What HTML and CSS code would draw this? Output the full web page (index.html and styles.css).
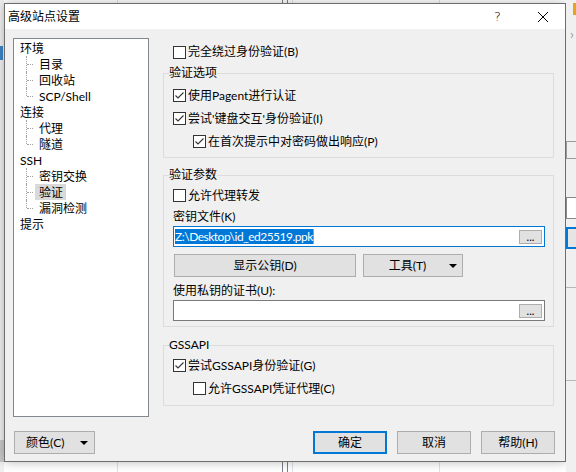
FILE: index.html
```html
<!DOCTYPE html>
<html lang="zh-CN">
<head>
    <meta charset="UTF-8">
    <title>高级站点设置</title>
    <link rel="stylesheet" href="styles.css">
</head>
<body>

<div class="desk">
    <div class="side-left">
        <div class="sl-icon"></div>
        <div class="sl-band"></div>
    </div>

    <div class="dialog">
        <div class="titlebar">
            <span class="title">高级站点设置</span>
            <span class="cap-btn help">?</span>
            <span class="cap-btn close">
                <svg width="10" height="10" viewBox="0 0 10 10"><path d="M0 0 L10 10 M10 0 L0 10" stroke="#000" stroke-width="1"/></svg>
            </span>
        </div>

        <div class="content">
            <div class="main">
                <div class="tree">
                    <ul>
                        <li><span class="node">环境</span>
                            <ul>
                                <li><span class="node">目录</span></li>
                                <li><span class="node">回收站</span></li>
                                <li><span class="node">SCP/Shell</span></li>
                            </ul>
                        </li>
                        <li><span class="node">连接</span>
                            <ul>
                                <li><span class="node">代理</span></li>
                                <li><span class="node">隧道</span></li>
                            </ul>
                        </li>
                        <li><span class="node">SSH</span>
                            <ul>
                                <li><span class="node">密钥交换</span></li>
                                <li><span class="node selected">验证</span></li>
                                <li><span class="node">漏洞检测</span></li>
                            </ul>
                        </li>
                        <li><span class="node">提示</span></li>
                    </ul>
                </div>

                <div class="panel">
                    <div class="check top-check">
                        <span class="box"></span>完全绕过身份验证(B)
                    </div>

                    <fieldset class="group group-options">
                        <legend>验证选项</legend>
                        <div class="check row23">
                            <span class="box"><svg width="11" height="11" viewBox="0 0 11 11"><path d="M1.5 5.5 L4 8 L9.5 2.5" fill="none" stroke="#333" stroke-width="1.1"/></svg></span>使用Pagent进行认证
                        </div>
                        <div class="check row23">
                            <span class="box"><svg width="11" height="11" viewBox="0 0 11 11"><path d="M1.5 5.5 L4 8 L9.5 2.5" fill="none" stroke="#333" stroke-width="1.1"/></svg></span>尝试'键盘交互'身份验证(I)
                        </div>
                        <div class="check row23 sub">
                            <span class="box"><svg width="11" height="11" viewBox="0 0 11 11"><path d="M1.5 5.5 L4 8 L9.5 2.5" fill="none" stroke="#333" stroke-width="1.1"/></svg></span>在首次提示中对密码做出响应(P)
                        </div>
                    </fieldset>

                    <fieldset class="group group-params">
                        <legend>验证参数</legend>
                        <div class="check row-forward">
                            <span class="box"></span>允许代理转发
                        </div>
                        <div class="label label-key">密钥文件(K)</div>
                        <div class="field focused">
                            <span class="selection">Z:\Desktop\id_ed25519.ppk</span><span class="caret"></span>
                            <span class="dots">...</span>
                        </div>
                        <div class="btn-row">
                            <span class="btn btn-show">显示公钥(D)</span>
                            <span class="btn btn-tools"><span class="btn-text">工具(T)</span><span class="arrow"></span></span>
                        </div>
                        <div class="label label-cert">使用私钥的证书(U):</div>
                        <div class="field">
                            <span class="dots">...</span>
                        </div>
                    </fieldset>

                    <fieldset class="group group-gss">
                        <legend>GSSAPI</legend>
                        <div class="check row23">
                            <span class="box"><svg width="11" height="11" viewBox="0 0 11 11"><path d="M1.5 5.5 L4 8 L9.5 2.5" fill="none" stroke="#333" stroke-width="1.1"/></svg></span>尝试GSSAPI身份验证(G)
                        </div>
                        <div class="check row23 sub">
                            <span class="box"></span>允许GSSAPI凭证代理(C)
                        </div>
                    </fieldset>
                </div>
            </div>

            <div class="footer">
                <span class="btn btn-color"><span>颜色(C)</span><span class="arrow"></span></span>
                <span class="btn btn-foot default">确定</span>
                <span class="btn btn-foot">取消</span>
                <span class="btn btn-foot">帮助(H)</span>
            </div>
        </div>
    </div>

    <div class="side-right">
        <div class="sr-icon"></div>
        <div class="sr-chev">›</div>
        <div class="sr-spin"></div>
        <div class="sr-box"></div>
        <div class="sr-combo"></div>
        <div class="sr-line"></div>
        <div class="sr-line second"></div>
    </div>
</div>

</body>
</html>
```

FILE: styles.css
```css
body {
    margin: 0;
    width: 576px;
    height: 472px;
    overflow: hidden;
    background-color: #fff;
    font-family: Lato, "Noto Sans CJK SC", sans-serif;
    font-size: 12px;
    line-height: 16px;
    color: #000;
}
.desk {
    display: flex;
    align-items: flex-start;
    height: 472px;
    background-image: linear-gradient(90deg,
        transparent 117px, #dbe2ea 117px 118px,
        transparent 118px 282px, #7b7f8c 282px 283px,
        transparent 283px 287px, #7b7f8c 287px 288px,
        transparent 288px 292px, #dbe2ea 292px 293px,
        transparent 293px 439px, #dbe2ea 439px 440px,
        transparent 440px);
}

/* bits of the window behind */
.side-left {
    width: 4px;
    height: 472px;
    flex-shrink: 0;
    background-color: #f0f0f0;
}
.sl-icon {
    width: 3px;
    height: 14px;
    margin-top: 46px;
    background-color: #3c86c8;
}
.sl-band {
    height: 22px;
    margin-top: 380px;
    background-color: #c9c9c9;
}
.side-right {
    width: 10px;
    height: 472px;
    flex-shrink: 0;
    background-color: #f0f0f0;
}
.sr-icon {
    width: 3px;
    height: 12px;
    margin: 3px 0 0 7px;
    background-color: #e8a318;
}
.sr-chev {
    margin: 12px 0 0 4px;
    height: 14px;
    line-height: 14px;
    color: #9a9a9a;
    font-size: 14px;
}
.sr-spin {
    height: 18px;
    margin-top: 100px;
    border: 1px solid #9a9a9a;
    border-right: none;
    box-sizing: border-box;
}
.sr-box {
    height: 22px;
    margin-top: 38px;
    border: 1px solid #8a8a8a;
    border-right: none;
    background-color: #fff;
    box-sizing: border-box;
}
.sr-combo {
    height: 22px;
    margin-top: 8px;
    border: 2px solid #0078d7;
    border-right: none;
    background-color: #e5e5e5;
    box-sizing: border-box;
}
.sr-line {
    height: 1px;
    margin-top: 38px;
    background-color: #b8b8b8;
}
.sr-line.second {
    margin-top: 92px;
}

/* dialog */
.dialog {
    width: 562px;
    height: 459px;
    margin-top: 3px;
    flex-shrink: 0;
    box-sizing: border-box;
    border: 1px solid #6d6d6d;
    background-color: #f0f0f0;
    box-shadow: 0 0 10px rgba(0, 0, 0, 0.28);
    display: flex;
    flex-direction: column;
}
.titlebar {
    height: 25px;
    display: flex;
    align-items: center;
    background-color: #fff;
}
.title {
    flex: 1;
    padding-left: 3px;
    line-height: 25px;
}
.cap-btn {
    width: 45px;
    height: 25px;
    display: flex;
    align-items: center;
    justify-content: center;
}
.help {
    font-family: "DejaVu Sans", sans-serif;
    font-size: 13px;
    font-weight: 300;
}
.close svg {
    margin-top: 1px;
}

.main {
    display: flex;
    align-items: flex-start;
    padding: 9px 0 0 8px;
}

/* tree */
.tree {
    width: 136px;
    height: 379px;
    box-sizing: border-box;
    border: 1px solid #828790;
    background-color: #fff;
    padding-top: 1px;
}
.tree ul {
    list-style: none;
    margin: 0;
    padding: 0;
}
.tree li {
    position: relative;
}
.node {
    display: block;
    width: max-content;
    height: 16px;
    line-height: 17px;
    margin-left: 2px;
    padding: 0 3px 0 4px;
    white-space: nowrap;
}
.tree ul ul {
    margin-left: 19px;
}
.tree ul ul li::before {
    content: "";
    position: absolute;
    left: -7px;
    top: 0;
    height: 16px;
    border-left: 1px dotted #a0a0a0;
}
.tree ul ul li:last-child::before {
    height: 8px;
}
.tree ul ul li::after {
    content: "";
    position: absolute;
    left: -6px;
    top: 8px;
    width: 6px;
    border-top: 1px dotted #a0a0a0;
}
.node.selected {
    background-color: #d9d9d9;
}

/* right side */
.panel {
    width: 391px;
    margin-left: 14px;
}
.check {
    display: flex;
    align-items: center;
    white-space: nowrap;
}
.box {
    width: 13px;
    height: 13px;
    box-sizing: border-box;
    border: 1px solid #333;
    background-color: #fff;
    margin-right: 2px;
    flex-shrink: 0;
}
.box svg {
    display: block;
}
.top-check {
    height: 16px;
    margin-top: 6px;
    padding-left: 10px;
}
.row23 {
    height: 23px;
}
.check.sub {
    margin-left: 20px;
}

.group {
    margin: 0;
    border: 1px solid #dcdcdc;
    min-width: 0;
}
.group legend {
    padding: 0;
    margin-left: -4px;
    height: 16px;
    line-height: 16px;
}
.group-options {
    margin-top: 5px;
    padding: 3px 8px 4px 9px;
}
.group-params {
    margin-top: 9px;
    padding: 2px 8px 5px 9px;
}
.group-gss {
    margin-top: 10px;
    padding: 1px 8px 5px 9px;
}

.row-forward {
    height: 21px;
}
.label {
    line-height: 19px;
}
.label-key {
    height: 20px;
    line-height: 21px;
}
.label-cert {
    height: 19px;
    margin-top: 4px;
}
.field {
    height: 21px;
    box-sizing: border-box;
    border: 1px solid #7a7a7a;
    background-color: #fff;
    display: flex;
    align-items: center;
    padding: 0 2px 0 1px;
}
.field.focused {
    border-color: #0078d7;
}
.selection {
    background-color: #0078d7;
    color: #fff;
    height: 15px;
    line-height: 15px;
    letter-spacing: -0.5px;
    white-space: nowrap;
}
.caret {
    width: 1px;
    height: 15px;
    background-color: #ff8a28;
}
.dots {
    margin-left: auto;
    width: 23px;
    height: 14px;
    box-sizing: border-box;
    border: 1px solid #adadad;
    background-color: #e1e1e1;
    text-align: center;
    line-height: 11px;
    font-size: 11px;
}

.btn {
    height: 23px;
    box-sizing: border-box;
    border: 1px solid #adadad;
    background-color: #e1e1e1;
    display: flex;
    align-items: center;
    justify-content: center;
    white-space: nowrap;
}
.arrow {
    width: 0;
    height: 0;
    border-left: 4px solid transparent;
    border-right: 4px solid transparent;
    border-top: 4px solid #000;
}
.btn-row {
    display: flex;
    margin-top: 7px;
    padding-left: 1px;
}
.btn-show {
    width: 182px;
}
.btn-tools {
    width: 100px;
    margin-left: 7px;
    padding-right: 5px;
}
.btn-tools .btn-text {
    flex: 1;
    text-align: center;
    padding-left: 2px;
}

.footer {
    display: flex;
    align-items: center;
    margin-top: 14px;
    padding: 0 10px 0 9px;
}
.btn-color {
    width: 81px;
    justify-content: space-between;
    padding: 0 6px 0 11px;
}
.btn-foot {
    width: 74px;
    margin-left: 10px;
}
.btn-foot.default {
    margin-left: auto;
    border: 2px solid #0078d7;
}
```
